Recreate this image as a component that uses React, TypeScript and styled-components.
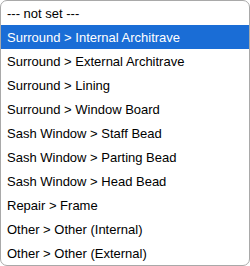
import React from "react";
import styled, { createGlobalStyle } from "styled-components";

const Global = createGlobalStyle`
  html, body { margin: 0; padding: 0; background: #ffffff; }
  body { font-family: "Liberation Sans", Arial, sans-serif; }
`;

const ListBox = styled.div`
  box-sizing: border-box;
  width: 250px;
  height: 266px;
  border: 1px solid #a9a9a9;
  border-radius: 7px;
  background: #ffffff;
  overflow: hidden;
  display: flex;
  flex-direction: column;
`;

const Option = styled.div<{ $selected?: boolean }>`
  height: 24px;
  flex: 0 0 24px;
  display: flex;
  align-items: center;
  padding-left: 6px;
  font-size: 13px;
  color: ${(p) => (p.$selected ? "#ffffff" : "#000000")};
  background: ${(p) => (p.$selected ? "#1a6dd6" : "transparent")};
  white-space: nowrap;
`;

const options = [
  "--- not set ---",
  "Surround > Internal Architrave",
  "Surround > External Architrave",
  "Surround > Lining",
  "Surround > Window Board",
  "Sash Window > Staff Bead",
  "Sash Window > Parting Bead",
  "Sash Window > Head Bead",
  "Repair > Frame",
  "Other > Other (Internal)",
  "Other > Other (External)",
];

export default function App() {
  return (
    <>
      <Global />
      <ListBox>
        {options.map((o, i) => (
          <Option key={o} $selected={i === 1}>
            {o}
          </Option>
        ))}
      </ListBox>
    </>
  );
}
